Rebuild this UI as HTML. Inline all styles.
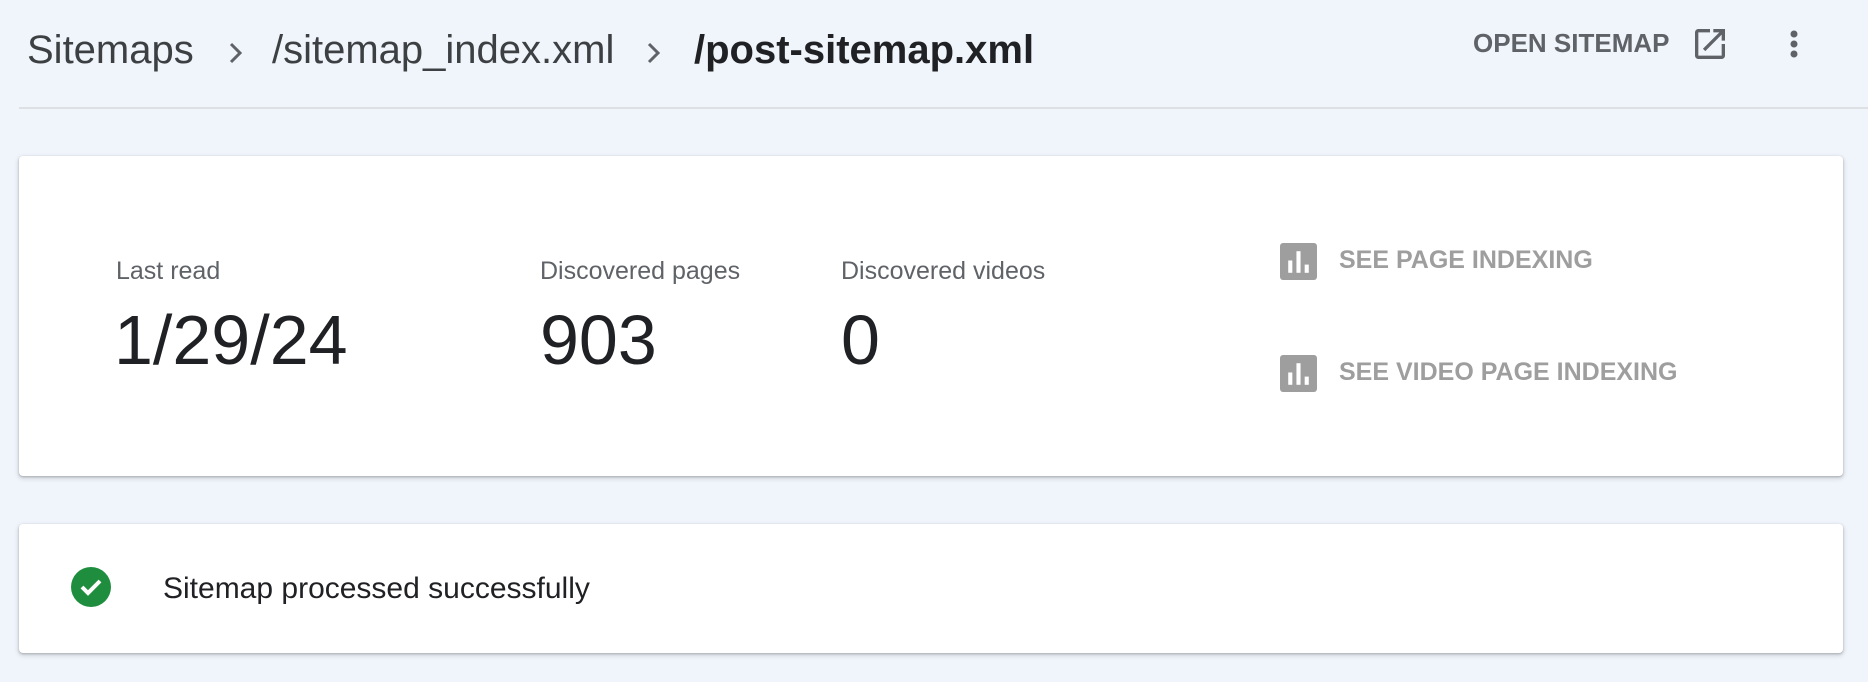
<!DOCTYPE html>
<html><head><style>
body{margin:0;width:1868px;height:682px;background:#f0f4fb;font-family:"Liberation Sans",Arial,sans-serif;position:relative;overflow:hidden}
.a{position:absolute;white-space:nowrap}
.bc{top:28px;font-size:40px;color:#3c4043}
.card{position:absolute;left:19px;width:1824px;background:#fff;border-radius:4px;box-shadow:0 1px 2px rgba(60,64,67,.3),0 2px 4px 1px rgba(60,64,67,.15)}
.lbl{font-size:25px;color:#5f6368;top:257px}
.big{font-size:70px;color:#202124;top:300px}
.lnk{font-size:25px;color:#9e9e9e;font-weight:bold}
</style></head><body>
<div class="a bc" style="left:27px">Sitemaps</div>
<svg class="a" style="left:226px;top:40px" width="20" height="26" viewBox="0 0 20 26"><path d="M5 4l9 9-9 9" fill="none" stroke="#5f6368" stroke-width="3"/></svg>
<div class="a bc" style="left:272px">/sitemap_index.xml</div>
<svg class="a" style="left:644px;top:40px" width="20" height="26" viewBox="0 0 20 26"><path d="M5 4l9 9-9 9" fill="none" stroke="#5f6368" stroke-width="3"/></svg>
<div class="a bc" style="left:694px;font-weight:bold;color:#202124">/post-sitemap.xml</div>
<div class="a" style="left:1473px;top:28px;font-size:26px;color:#5f6368;font-weight:bold">OPEN SITEMAP</div>
<svg class="a" style="left:1690px;top:24px" width="40" height="40" viewBox="0 0 24 24"><path d="M19 19H5V5h7V3H5a2 2 0 0 0-2 2v14a2 2 0 0 0 2 2h14a2 2 0 0 0 2-2v-7h-2v7zM14 3v2h3.59l-9.83 9.83 1.41 1.41L19 6.41V10h2V3h-7z" fill="#5f6368"/></svg>
<svg class="a" style="left:1782px;top:24px" width="24" height="40" viewBox="0 0 24 40"><circle cx="12" cy="10" r="3.5" fill="#5f6368"/><circle cx="12" cy="20" r="3.5" fill="#5f6368"/><circle cx="12" cy="30" r="3.5" fill="#5f6368"/></svg>
<div class="a" style="left:19px;top:107px;width:1849px;height:2px;background:#dde1e4"></div>
<div class="card" style="top:156px;height:320px"></div>
<div class="a lbl" style="left:116px">Last read</div>
<div class="a lbl" style="left:540px">Discovered pages</div>
<div class="a lbl" style="left:841px">Discovered videos</div>
<div class="a big" style="left:114px">1/29/24</div>
<div class="a big" style="left:540px">903</div>
<div class="a big" style="left:841px">0</div>
<svg class="a" style="left:1280px;top:243px" width="37" height="37" viewBox="0 0 36 36"><rect width="36" height="36" rx="3" fill="#9e9e9e"/><rect x="8" y="17" width="4" height="12" fill="#fff"/><rect x="16" y="8" width="4" height="21" fill="#fff"/><rect x="24" y="21" width="4" height="8" fill="#fff"/></svg>
<div class="a lnk" style="left:1339px;top:246px">SEE PAGE INDEXING</div>
<svg class="a" style="left:1280px;top:355px" width="37" height="37" viewBox="0 0 36 36"><rect width="36" height="36" rx="3" fill="#9e9e9e"/><rect x="8" y="17" width="4" height="12" fill="#fff"/><rect x="16" y="8" width="4" height="21" fill="#fff"/><rect x="24" y="21" width="4" height="8" fill="#fff"/></svg>
<div class="a lnk" style="left:1339px;top:358px">SEE VIDEO PAGE INDEXING</div>
<div class="card" style="top:524px;height:129px"></div>
<svg class="a" style="left:71px;top:567px" width="40" height="40" viewBox="0 0 40 40"><circle cx="20" cy="20" r="20" fill="#1e8e3e"/><path d="M11 20l6 6 12-12" fill="none" stroke="#fff" stroke-width="4"/></svg>
<div class="a" style="left:163px;top:572px;font-size:30px;color:#202124">Sitemap processed successfully</div>
</body></html>
